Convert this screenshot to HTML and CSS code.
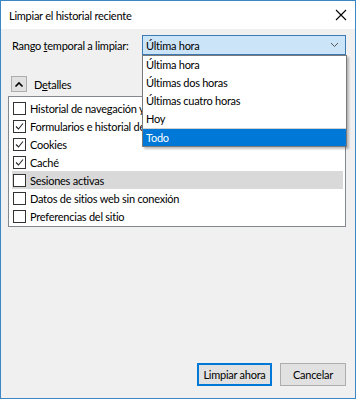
FILE: index.html
```html
<!DOCTYPE html>
<html lang="es">
<head>
<meta charset="utf-8">
<link rel="stylesheet" href="styles.css">
</head>
<body>
<div class="window">
  <div class="titlebar">
    <span class="title">Limpiar el historial reciente</span>
    <svg class="close" width="12" height="12" viewBox="0 0 12 12"><path d="M1 1L11 11M11 1L1 11" stroke="#000" stroke-width="1.1" fill="none"/></svg>
  </div>
  <div class="content">
    <div class="range-row">
      <span class="range-label">Rango <u>t</u>emporal a limpiar:</span>
      <div class="select">
        <span>Última hora</span>
        <svg class="chev" width="9" height="6" viewBox="0 0 9 6"><path d="M1 1L4.5 4.5L8 1" stroke="#555" stroke-width="1" fill="none"/></svg>
      </div>
      <div class="dropdown">
        <div class="opt">Última hora</div>
        <div class="opt">Últimas dos horas</div>
        <div class="opt">Últimas cuatro horas</div>
        <div class="opt">Hoy</div>
        <div class="opt sel">Todo</div>
      </div>
    </div>
    <div class="details-row">
      <div class="toggle"><svg width="10" height="7" viewBox="0 0 10 7"><path d="M1.5 5.5L5 2L8.5 5.5" stroke="#000" stroke-width="1.6" fill="none"/></svg></div>
      <span class="details-label">D<u>e</u>talles</span>
    </div>
    <div class="listbox">
      <div class="item"><span class="cb"></span>Historial de navegación y descargas</div>
      <div class="item"><span class="cb on"><svg width="11" height="11" viewBox="0 0 11 11"><path d="M2 5.5L4.5 8L9 2.5" stroke="#222" stroke-width="1.1" fill="none"/></svg></span>Formularios e historial de búsqueda</div>
      <div class="item"><span class="cb on"><svg width="11" height="11" viewBox="0 0 11 11"><path d="M2 5.5L4.5 8L9 2.5" stroke="#222" stroke-width="1.1" fill="none"/></svg></span>Cookies</div>
      <div class="item"><span class="cb on"><svg width="11" height="11" viewBox="0 0 11 11"><path d="M2 5.5L4.5 8L9 2.5" stroke="#222" stroke-width="1.1" fill="none"/></svg></span>Caché</div>
      <div class="item hl"><span class="cb"></span>Sesiones activas</div>
      <div class="item"><span class="cb"></span>Datos de sitios web sin conexión</div>
      <div class="item"><span class="cb"></span>Preferencias del sitio</div>
    </div>
    <div class="spacer"></div>
    <div class="buttons">
      <button class="btn primary">Limpiar ahora</button>
      <button class="btn cancel">Cancelar</button>
    </div>
  </div>
</div>
</body>
</html>
```
FILE: styles.css
```css
html, body {
  margin: 0;
  padding: 0;
  background: #f0f0f0;
}
.window {
  width: 356px;
  height: 399px;
  box-sizing: border-box;
  border: 1px solid #3b86c4;
  display: flex;
  flex-direction: column;
  font-family: "Lato", "Noto Sans", sans-serif;
  font-size: 11px;
  letter-spacing: -0.25px;
  color: #000;
  white-space: nowrap;
}
.titlebar {
  height: 28px;
  background: #fff;
  display: flex;
  align-items: center;
  justify-content: space-between;
  padding: 0 8px 0 8px;
  flex: none;
}
.close {
  display: block;
}
.content {
  flex: 1;
  display: flex;
  flex-direction: column;
  background: #f0f0f0;
  padding: 6px 9px 12px 7px;
}
.range-row {
  position: relative;
  display: flex;
  align-items: center;
  height: 20px;
}
.range-label {
  margin-left: 4px;
  width: 130px;
  flex: none;
}
.select {
  flex: 1;
  height: 20px;
  box-sizing: border-box;
  border: 1px solid #3c7ab5;
  background: #cce4f7;
  display: flex;
  align-items: center;
  justify-content: space-between;
  padding: 0 6px 0 3px;
}
.chev {
  display: block;
}
.dropdown {
  position: absolute;
  left: 134px;
  top: 20px;
  width: 205px;
  box-sizing: border-box;
  background: #fff;
  border: 1px solid #7a7a7a;
  box-shadow: 2px 2px 2px rgba(0, 0, 0, 0.25);
  z-index: 5;
}
.opt {
  height: 18px;
  line-height: 18px;
  padding-left: 3px;
}
.opt.sel {
  background: #0078d7;
  color: #fff;
  border-top: 1px solid #d0d0d0;
  background-clip: padding-box;
  height: 17px;
  line-height: 17px;
}
.details-row {
  display: flex;
  align-items: center;
  margin-top: 21px;
  height: 16px;
}
.toggle {
  width: 16px;
  height: 16px;
  box-sizing: border-box;
  margin-left: 3px;
  border: 1px solid #adadad;
  background: #e1e1e1;
  display: flex;
  align-items: center;
  justify-content: center;
}
.toggle svg {
  display: block;
}
.details-label {
  margin-left: 7px;
}
.listbox {
  margin-top: 4px;
  height: 131px;
  box-sizing: border-box;
  border: 1px solid #828790;
  background: #fff;
  padding: 2px 2px 1px 3px;
  overflow: hidden;
}
.item {
  height: 18px;
  display: flex;
  align-items: center;
  padding-left: 1px;
}
.item.hl {
  background: #d9d9d9;
}
.cb {
  width: 13px;
  height: 13px;
  box-sizing: border-box;
  border: 1px solid #333;
  background: #fff;
  margin-right: 4px;
  flex: none;
  display: flex;
  align-items: center;
  justify-content: center;
}
.cb svg {
  display: block;
}
.spacer {
  flex: 1;
}
.buttons {
  display: flex;
  justify-content: flex-end;
  gap: 8px;
}
.btn {
  height: 23px;
  box-sizing: border-box;
  font-family: inherit;
  font-size: 11px;
  letter-spacing: -0.25px;
  color: #000;
  background: #e1e1e1;
  border: 1px solid #adadad;
  padding: 0;
  margin: 0;
  white-space: nowrap;
}
.btn.primary {
  width: 75px;
  border: 2px solid #0078d7;
}
.btn.cancel {
  width: 66px;
}
```
